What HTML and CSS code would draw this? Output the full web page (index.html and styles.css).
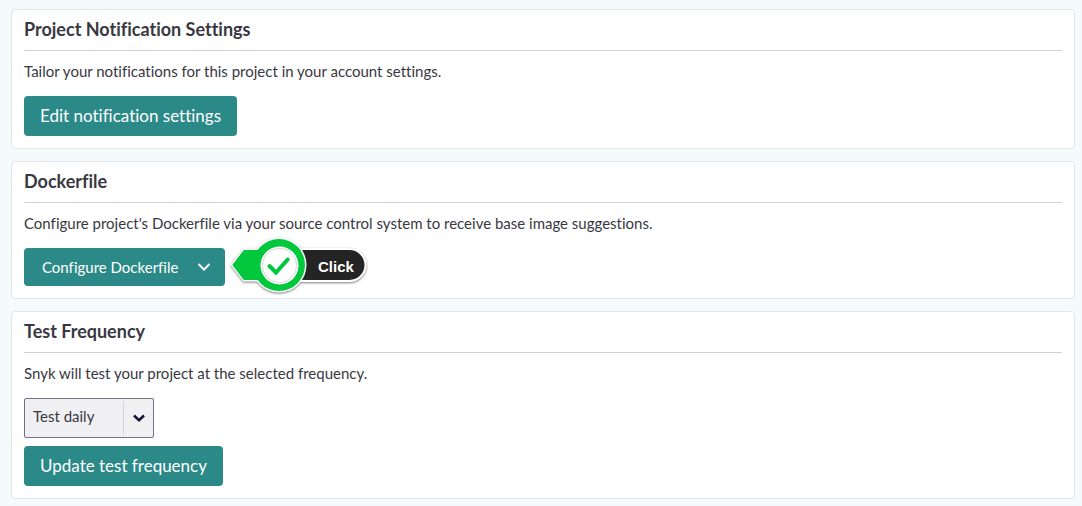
FILE: index.html
```html
<!DOCTYPE html>
<html lang="en">
<head>
<meta charset="utf-8">
<meta name="viewport" content="width=device-width, initial-scale=1">
<title>Project settings</title>
<link rel="stylesheet" href="styles.css">
</head>
<body>
<main class="settings">
  <section class="card">
    <h2 class="card-title">Project Notification Settings</h2>
    <p class="card-text">Tailor your notifications for this project in your account settings.</p>
    <div class="actions"><button class="button" type="button">Edit notification settings</button></div>
  </section>
  <section class="card">
    <h2 class="card-title">Dockerfile</h2>
    <p class="card-text">Configure project's Dockerfile via your source control system to receive base image suggestions.</p>
    <div class="actions">
      <div class="anchor">
        <button class="button button-menu" type="button">Configure Dockerfile
          <svg width="14" height="10" viewBox="0 0 14 10" fill="none" stroke="#fff" stroke-width="2" aria-hidden="true"><path d="M1.500 2 7 7.600 12.500 2"/></svg>
        </button>
        <div class="callout">
          <svg class="callout-shape" width="150" height="70" viewBox="0 0 150 70" aria-hidden="true">
            <g class="callout-shadow">
              <path d="M75 20H129.500a15 15 0 0 1 0 30H75Z" fill="#242424" stroke="#fff" stroke-width="4" paint-order="stroke"/>
              <path d="M12.500 35 24 20H45V50H24Z" fill="#00c73c" stroke="#fff" stroke-width="3" paint-order="stroke"/>
              <circle cx="59" cy="35" r="27.500" fill="#fff"/>
            </g>
            <path d="M12.500 35 24 20H45V50H24Z" fill="#00c73c"/>
            <circle cx="59" cy="35" r="26" fill="#00c73c"/>
            <circle cx="59.500" cy="35.500" r="19" fill="#fff"/>
            <circle cx="59.500" cy="35.500" r="17" fill="#fff" stroke="#d4d9d5" stroke-width="1"/>
            <path d="M49.500 36 56 42.500 67.700 29.500" fill="none" stroke="#00c73c" stroke-width="4" stroke-linecap="round"/>
          </svg>
          <span class="callout-label">Click</span>
        </div>
      </div>
    </div>
  </section>
  <section class="card">
    <h2 class="card-title">Test Frequency</h2>
    <p class="card-text">Snyk will test your project at the selected frequency.</p>
    <div class="actions">
      <div class="select">
        <select class="select-input" aria-label="Test frequency">
          <option>Test daily</option>
          <option>Test weekly</option>
          <option>Never test</option>
        </select>
        <span class="select-arrow"><svg width="12" height="8" viewBox="0 0 12 8" fill="none" stroke="#14103a" stroke-width="2.500" aria-hidden="true"><path d="M1 1.500 6 6.200 11 1.500"/></svg></span>
      </div>
      <button class="button" type="button">Update test frequency</button>
    </div>
  </section>
</main>
</body>
</html>
```
FILE: styles.css
```css
* { box-sizing: border-box; }
body {
  margin: 0;
  background: #f5fafd;
  color: #393842;
  font-family: Lato, "Open Sans", sans-serif;
  font-size: 15px;
  font-variant-ligatures: none;
}
.settings {
  display: flex;
  flex-direction: column;
  gap: 12px;
  padding: 9px 7px 7px 11px;
}
.card {
  padding: 0 12px 12px;
  background: #fff;
  border: 1px solid #e1e5ec;
  border-radius: 4px;
}
.card-title {
  margin: 0;
  padding-bottom: 2px;
  border-bottom: 1px solid #d0d0d6;
  font-size: 18px;
  font-weight: 700;
  line-height: 38px;
}
.card-text {
  margin: 10px 0 15px;
  line-height: 20px;
}
.actions {
  display: flex;
  flex-direction: column;
  align-items: flex-start;
  gap: 8px;
}
.button {
  height: 40px;
  padding: 0 16px 2px;
  border: 0;
  border-radius: 4px;
  background: #2b8a88;
  color: #fff;
  font-family: inherit;
  font-size: 17px;
  font-variant-ligatures: inherit;
}
.button-menu {
  display: flex;
  align-items: center;
  gap: 19px;
  height: 38px;
  padding: 0 14px 0 18px;
  font-size: 15px;
}
.anchor { position: relative; }
.callout {
  position: absolute;
  top: -18px;
  left: 196px;
  width: 150px;
  height: 70px;
}
.callout-shape { display: block; }
.callout-shadow { filter: drop-shadow(0 1px 1px rgba(0, 0, 0, 0.5)); }
.callout-label {
  position: absolute;
  top: 27px;
  left: 98px;
  color: #fff;
  font: 700 15px/20px "Liberation Sans", Arial, sans-serif;
}
.select {
  display: grid;
  width: 130px;
}
.select-input {
  grid-area: 1 / 1;
  height: 40px;
  padding: 0 30px 4px 8px;
  appearance: none;
  border: 1px solid #727088;
  border-radius: 2px;
  background: #f0f0f3;
  color: #393842;
  font-family: inherit;
  font-size: 15px;
}
.select-arrow {
  grid-area: 1 / 1;
  justify-self: end;
  display: grid;
  place-items: center;
  width: 31px;
  margin: 3px 0;
  border-left: 1px solid #d3d3da;
  pointer-events: none;
}
```
